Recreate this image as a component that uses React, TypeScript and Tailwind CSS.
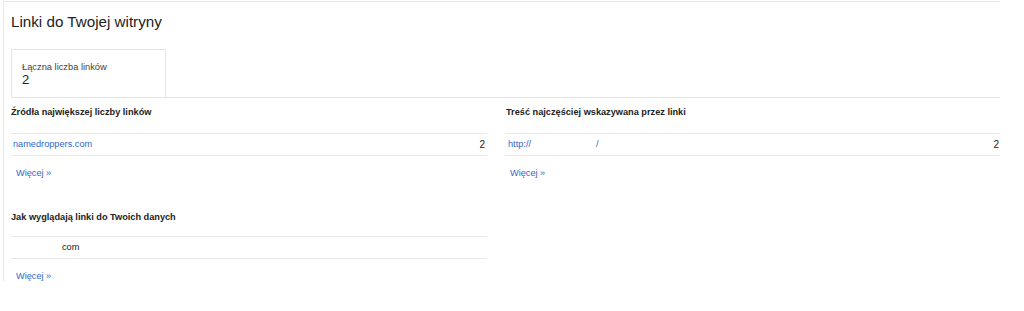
export default function App() {
  const font = { fontFamily: '"Liberation Sans", Arial, sans-serif' }
  return (
    <div className="w-[1024px] h-[311px] bg-white pl-[3px] pt-[1px]" style={font}>
      <div className="w-[997px] h-[280px] border-l border-t border-[#e8e8e8] pl-[7px]">
        <h1 className="pt-[11px] text-[15.2px] leading-[18px] text-[#222]">Linki do Twojej witryny</h1>

        <div className="mt-[18px] border-b border-[#e5e5e5]">
          <div className="w-[155px] h-[48px] border-l border-t border-r border-[#e5e5e5] pl-[10px] pt-[11px]">
            <div className="text-[9.3px] leading-[12px] text-[#444]">Łączna liczba linków</div>
            <div className="text-[13px] leading-[14px] text-[#222]">2</div>
          </div>
        </div>

        <div className="flex gap-[18px]">
          <div className="w-[476px]">
            <h2 className="h-[35px] pt-[8px] text-[9.2px] leading-[12px] font-bold text-[#222]">Źródła największej liczby linków</h2>
            <div className="flex items-center justify-between h-[23px] border-t border-b border-[#e8e8e8] px-[2px] text-[9.2px]">
              <a className="text-[#3366cc]">namedroppers.com</a>
              <span className="text-[#222] text-[10px]">2</span>
            </div>
            <div className="pl-[5px] pt-[11px] text-[9.2px] leading-[12px] text-[#3366cc]">Więcej »</div>

            <h2 className="h-[57px] pt-[32px] text-[9.2px] leading-[12px] font-bold text-[#222]">Jak wyglądają linki do Twoich danych</h2>
            <div className="flex items-center h-[23px] border-t border-b border-[#e8e8e8] pl-[51px] text-[9.2px] text-[#222]">
              com
            </div>
            <div className="pl-[5px] pt-[11px] text-[9.2px] leading-[12px] text-[#3366cc]">Więcej »</div>
          </div>

          <div className="w-[495px]">
            <h2 className="h-[35px] pt-[8px] pl-[1px] text-[9.2px] leading-[12px] font-bold text-[#222]">Treść najczęściej wskazywana przez linki</h2>
            <div className="flex items-center justify-between h-[23px] border-t border-b border-[#e8e8e8] pl-[3px] pr-[1px] text-[9.2px]">
              <a className="text-[#3366cc]">
                http://<span className="inline-block w-[65px]"></span>/
              </a>
              <span className="text-[#222] text-[10px]">2</span>
            </div>
            <div className="pl-[5px] pt-[11px] text-[9.2px] leading-[12px] text-[#3366cc]">Więcej »</div>
          </div>
        </div>
      </div>
    </div>
  )
}
